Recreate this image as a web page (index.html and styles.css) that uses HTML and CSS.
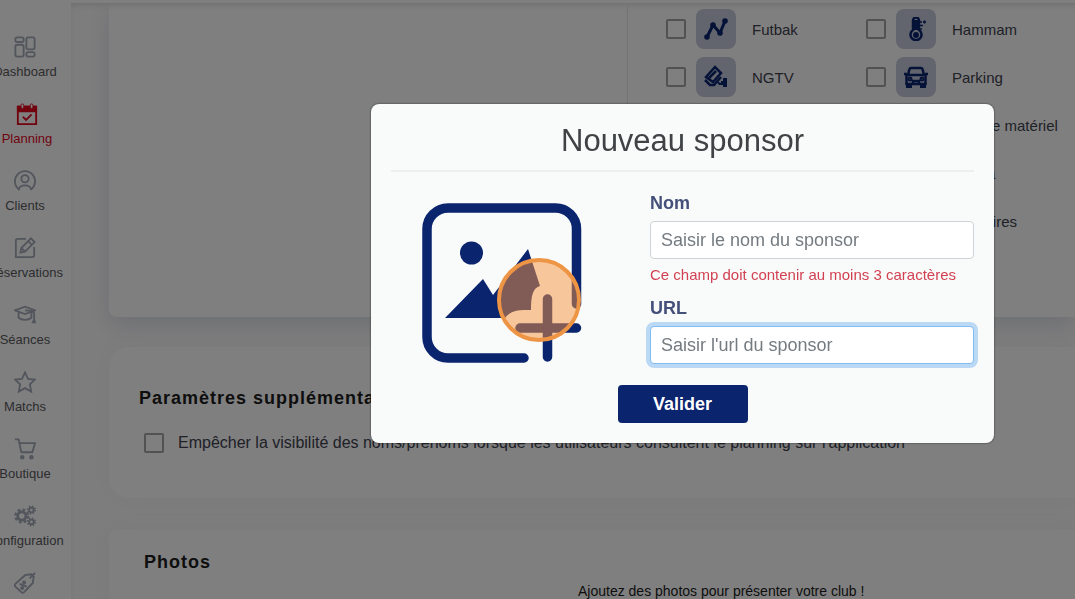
FILE: index.html
```html
<!DOCTYPE html>
<html lang="fr">
<head>
<meta charset="utf-8">
<title>Nouveau sponsor</title>
<link rel="stylesheet" href="styles.css">
</head>
<body>
<div class="page">
  <nav class="sidebar">
    <a class="nav-item" href="#"><svg viewBox="0 0 24 24"><rect x="1.500" y="1.500" width="9" height="5" rx="2"/><rect x="1.500" y="9.500" width="9" height="13" rx="2"/><rect x="13.500" y="1.500" width="9" height="13" rx="2"/><rect x="13.500" y="17.500" width="9" height="5" rx="2"/></svg><span>Dashboard</span></a>
    <a class="nav-item active" href="#"><svg viewBox="0 0 24 24"><path d="M2 4h20v19H2z"/><path d="M2 4h20v5H2z" fill="currentColor"/><path d="M7.500 15l3.500 3.500 6-6"/><rect class="ring" x="5.500" y="1" width="3" height="5" rx="1.500"/><rect class="ring" x="15.500" y="1" width="3" height="5" rx="1.500"/></svg><span>Planning</span></a>
    <a class="nav-item" href="#"><svg viewBox="0 0 24 24"><path d="M6 21.500A11 11 0 1 1 18 21.500"/><circle cx="12" cy="9.500" r="4"/><path d="M5 22c1-7 13-7 14 0"/></svg><span>Clients</span></a>
    <a class="nav-item" href="#"><svg viewBox="0 0 24 24"><path d="M13 2H4a2 2 0 0 0-2 2v18h18a2 2 0 0 0 2-2v-9"/><path d="M7 17l1-5L18.500 1.500l4 4L12 16zM15.500 4.500l4 4M8 12l4 4"/></svg><span>Réservations</span></a>
    <a class="nav-item" href="#"><svg viewBox="0 0 24 24"><path d="M1 7l11-4 11 4-11 4zM5 9v6c3 3 11 3 14 0V9M12 7c5 0 9 1 10 3v6M20.500 20l1.500-3 1 3z"/></svg><span>Séances</span></a>
    <a class="nav-item" href="#"><svg viewBox="0 0 24 24"><path d="M12 1.500l3.300 7 7.500.9-5.500 5.200 1.500 7.900-6.800-3.800-6.800 3.800 1.500-7.900L1.200 9.400l7.500-.9z"/></svg><span>Matchs</span></a>
    <a class="nav-item" href="#"><svg viewBox="0 0 24 24"><path d="M1 1.500h4l3 14h12l3-10H6"/><circle cx="9" cy="21" r="1.500" fill="currentColor"/><circle cx="19" cy="21" r="1.500" fill="currentColor"/></svg><span>Boutique</span></a>
    <a class="nav-item" href="#"><svg viewBox="0 0 24 24"><circle cx="8.500" cy="12" r="4.500" stroke-width="3"/><circle cx="8.500" cy="12" r="7" stroke-width="2.500" stroke-dasharray="3 2.500"/><circle cx="19" cy="5.500" r="2.500"/><circle cx="19" cy="5.500" r="4" stroke-dasharray="1.600 1.540"/><circle cx="19" cy="18.500" r="2.500"/><circle cx="19" cy="18.500" r="4" stroke-dasharray="1.600 1.540"/></svg><span>Configuration</span></a>
    <a class="nav-item" href="#" aria-label="Promotions"><svg viewBox="0 0 24 24"><path d="M12 3.500l7-1 2.500 2.500-1 7-9.500 10q-1.500 1.500-3 0L1.500 16q-1.500-1.500 0-3zM17 7l6-6M6 13l8 3"/><circle cx="11" cy="11.500" r="1.200"/><circle cx="9" cy="17.500" r="1.200"/></svg></a>
  </nav>
  <main class="content">
    <section class="card services">
      <div class="preview"></div>
      <div class="options">
        <label class="option"><input type="checkbox"><span class="tile"><svg viewBox="0 0 24 24"><path d="M3 20L9 8l7 8 5-12" stroke-width="3"/><g fill="currentColor" stroke="none"><circle cx="3" cy="20" r="2.800"/><circle cx="9" cy="8" r="2.800"/><circle cx="16" cy="16" r="2.800"/><circle cx="21" cy="4" r="2.800"/></g></svg></span>Futbak</label>
        <label class="option"><input type="checkbox"><span class="tile"><svg viewBox="0 0 24 24"><path d="M9 13V3.500a3 3 0 0 1 6 0V13a5.500 5.500 0 1 1-6 0z" stroke-width="2.500"/><path d="M12 3v10" stroke-width="5"/><circle cx="12" cy="18" r="2" fill="currentColor"/><path d="M15 5h3M15 8.500h4M15 12h3M19 5h3M20.500 3.500v3" stroke-width="1.500"/></svg></span>Hammam</label>
        <label class="option"><input type="checkbox"><span class="tile"><svg viewBox="0 0 24 24"><path d="M2 12L11 2l6 6-8 9z" stroke-width="2.500"/><path d="M5 13l7-7M1 15l5 5h4l7-8" stroke-width="2.500"/><path d="M12 16l5 2v-2h2v-3h4v9h-4v-2h-4z" fill="currentColor" stroke="none"/></svg></span>NGTV</label>
        <label class="option"><input type="checkbox"><span class="tile"><svg viewBox="0 0 24 24"><path d="M4 10l1.500-6q.3-1 1.500-1h10q1.200 0 1.500 1L20 10M2.500 10h19v9h-19zM0 9h3M21 9h3M9 19v-3h6v3" stroke-width="2.500"/><circle cx="6" cy="14" r="1.500"/><circle cx="18" cy="14" r="1.500"/><path d="M3 19h4v3H3zM17 19h4v3h-4z" fill="currentColor"/></svg></span>Parking</label>
        <span></span>
        <label class="option"><input type="checkbox"><span class="tile"></span>Prêt de matériel</label>
        <span></span>
        <label class="option"><input type="checkbox"><span class="tile"></span>Sauna</label>
        <span></span>
        <label class="option"><input type="checkbox"><span class="tile"></span>Vestiaires</label>
      </div>
    </section>
    <section class="card settings">
      <h2>Paramètres supplémentaires</h2>
      <label class="setting"><input type="checkbox">Empêcher la visibilité des noms/prénoms lorsque les utilisateurs consultent le planning sur l'application</label>
    </section>
    <section class="card photos">
      <h2>Photos</h2>
      <p>Ajoutez des photos pour présenter votre club !</p>
    </section>
  </main>
</div>
<div class="backdrop">
  <form class="modal" role="dialog" aria-labelledby="title">
    <h1 id="title">Nouveau sponsor</h1>
    <div class="modal-body">
      <div class="picture">
        <svg viewBox="0 0 160 160"><g fill="none" stroke="#0a246e" stroke-width="9.500" stroke-linecap="round"><path d="M154.500 101V26A21 21 0 0 0 133 5H26A21 21 0 0 0 5 26V134A21 21 0 0 0 26 155H102M98 125H154.500M125.500 96V154"/></g><circle cx="49.500" cy="50" r="11.500" fill="#0a246e"/><path d="M23 115L61 76l10 16 35-46 12 37c-7 2-9 9-9 24-13 0-20 0-26 8z" fill="#0a246e"/></svg>
        <span class="pointer"></span>
      </div>
      <div class="fields">
        <label for="name">Nom</label>
        <input id="name" type="text" placeholder="Saisir le nom du sponsor">
        <p class="error">Ce champ doit contenir au moins 3 caractères</p>
        <label for="url">URL</label>
        <input id="url" class="focused" type="text" placeholder="Saisir l'url du sponsor">
      </div>
    </div>
    <button type="button">Valider</button>
  </form>
</div>
</body>
</html>
```
FILE: styles.css
```css
* { box-sizing: border-box; }
body {
  margin: 0;
  overflow: hidden;
  font-family: "Liberation Sans", Arial, sans-serif;
  color: #40424e;
  background: #fbfbfc;
}
.page { display: flex; height: 100vh; overflow: hidden; border-top: 3px solid #fff; }
.sidebar {
  flex: none;
  width: 71px;
  padding-top: 33px;
  background: #fff;
  box-shadow: 0 0 6px #ecedf0;
}
.nav-item {
  display: flex;
  flex-direction: column;
  align-items: center;
  gap: 6px;
  width: 50px;
  height: 67px;
  color: #5a5a5e;
  font-size: 13px;
  line-height: 16px;
  white-space: nowrap;
  text-decoration: none;
}
.nav-item svg {
  width: 22px;
  height: 22px;
  fill: none;
  stroke: #a4aab9;
  color: #a4aab9;
  stroke-width: 2;
  flex: none;
}
.nav-item.active { color: #e3061e; width: 54px; }
.nav-item.active svg { stroke: #e3061e; color: #e3061e; }
.nav-item.active .ring { fill: #fff; stroke-width: 1; }
.content { flex: 1; min-width: 0; padding-left: 38px; box-shadow: inset 0 8px 8px -8px #ccc; }
.card { background: #fff; }
.services {
  display: flex;
  height: 314px;
  border-radius: 0 0 0 8px;
  box-shadow: 0 8px 24px #dcdee4, inset 0 8px 8px -8px #ccc;
}
.preview { width: 519px; border-right: 1px solid #e8e8ec; }
.options {
  display: grid;
  grid-template-columns: 200px 200px;
  grid-auto-rows: 40px;
  gap: 8px 0;
  padding: 6px 0 0 38px;
}
.option { display: flex; align-items: center; font-size: 15px; white-space: nowrap; }
input[type="checkbox"] {
  appearance: none;
  flex: none;
  width: 20px;
  height: 20px;
  margin: 0 10px 0 0;
  border: 2px solid #a4a4a4;
  border-radius: 2px;
}
.tile {
  display: grid;
  place-items: center;
  width: 40px;
  height: 40px;
  margin-right: 16px;
  border-radius: 8px;
  background: #c5cadb;
}
.tile svg {
  width: 24px;
  height: 24px;
  color: #0a246e;
  fill: none;
  stroke: #0a246e;
  stroke-width: 2;
}
h2 {
  margin: 0;
  color: #1c1c1c;
  font-size: 18px;
  font-weight: 900;
  line-height: 20px;
  letter-spacing: 1px;
}
.settings {
  height: 151px;
  margin-top: 30px;
  padding: 41px 30px;
  border-radius: 20px 0 0 20px;
  box-shadow: 0 0 24px #f2f3f5;
}
.setting { display: flex; align-items: center; margin: 25px 0 0 5px; font-size: 16px; white-space: nowrap; }
.setting input[type="checkbox"] { margin-right: 14px; }
.photos {
  height: 120px;
  margin-top: 32px;
  padding: 22px 35px;
  border-radius: 8px 0 0;
  box-shadow: 0 0 24px #f2f3f5;
}
.photos p {
  margin: 11px 0 0 434px;
  color: #1c1c1c;
  font-size: 14px;
  line-height: 16px;
  white-space: nowrap;
}
.backdrop {
  position: fixed;
  inset: 0;
  display: flex;
  align-items: flex-start;
  padding: 104px 81px 0 371px;
  background: rgba(0, 0, 0, 0.5);
}
.modal {
  flex: 1;
  display: flex;
  flex-direction: column;
  align-items: center;
  padding: 16px 20px 20px;
  border-radius: 8px;
  background: #f9fbfa;
  box-shadow: 0 0 2px #222;
}
h1 {
  align-self: stretch;
  margin: 0 0 20px;
  padding-bottom: 8px;
  border-bottom: 2px solid #eceeef;
  text-align: center;
  color: #404346;
  font-size: 31px;
  font-weight: 400;
  line-height: 42px;
}
.modal-body { align-self: stretch; display: flex; justify-content: space-between; }
.picture { position: relative; width: 160px; height: 160px; margin: 11px 0 0 31px; }
.picture svg { display: block; width: 160px; height: 160px; }
.pointer {
  position: absolute;
  left: 75px;
  top: 55px;
  width: 84px;
  height: 84px;
  border: 4px solid #ee9445;
  border-radius: 50%;
  background: rgba(247, 145, 60, 0.5);
}
.fields { display: flex; flex-direction: column; width: 324px; }
.fields label { color: #44507a; font-size: 18px; font-weight: 700; line-height: 22px; margin-bottom: 7px; }
.fields input {
  height: 38px;
  padding: 0 10px;
  border: 1px solid #ced4da;
  border-radius: 4px;
  background: #fff;
  font: 18px "Liberation Sans", Arial, sans-serif;
}
.fields input::placeholder { color: #747b81; opacity: 1; }
.fields .focused { border-color: #80bdf0; box-shadow: 0 0 0 4px #bbd9f5; }
.error { margin: 6px 0 12px; color: #d24152; font-size: 15px; line-height: 20px; }
button {
  width: 130px;
  height: 38px;
  margin-top: 21px;
  border: 0;
  border-radius: 4px;
  background: #0a246e;
  color: #fff;
  font: 700 18px "Liberation Sans", Arial, sans-serif;
}
```
